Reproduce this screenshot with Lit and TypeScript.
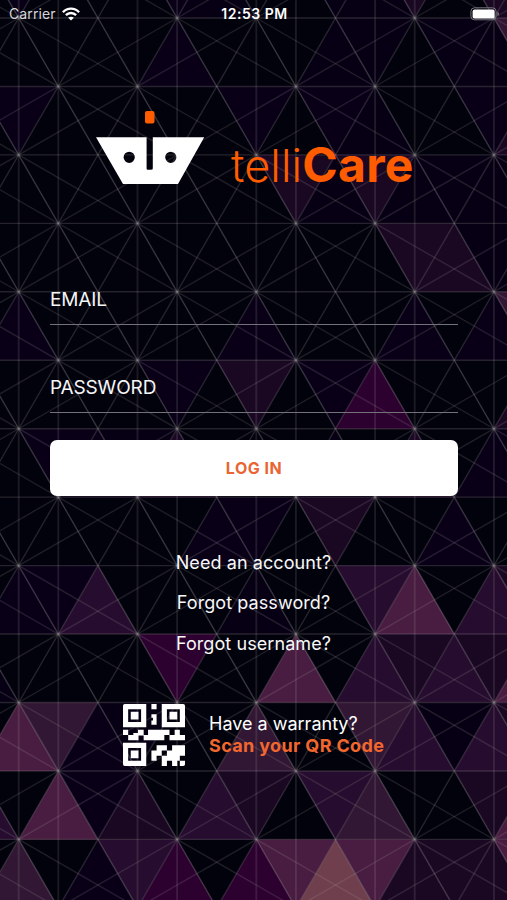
import { LitElement, html, svg, css } from "lit";
import { customElement } from "lit/decorators.js";

const X0 = 18.7;
const Y0 = 18;
const HALF = 39.6;
const ROW = 68.45;

const TONES: Record<string, string> = {
  a: "#070014",
  p: "#090017",
  b: "#1a0823",
  c: "#260c2e",
  m: "#2c002f",
  v: "#311733",
  r: "#491d41",
  o: "#6f3f4d",
};

// Each band of triangles: starting row, then column and tone pairs.
const BANDS: [number, string][] = [
  [-1, "0p 4p 5a 8a 9a 10b 12b 13b"],
  [0, "4p 8a 9a 11a 12a 13v"],
  [1, "0p 6p 8p 9a 12p 13b"],
  [2, "7b 8a 9b 10a 11a 12a 13a"],
  [3, "10b 11b 12a 13a"],
  [4, "0p 6p 10p 12p 13v"],
  [5, "4p 6b 8p 9m 13b"],
  [6, "1p 2p 3a 4b 8a 10b 12p 13p"],
  [7, "5p 6p 8b 11p"],
  [8, "0p 1p 2c 6a 9c 10r 12c 13b"],
  [9, "-1a 4m 7r 9c 10b 11c 12b 13r"],
  [10, "0r 1v 2p 3a 6v 9v 10c 11a 12c 13b"],
  [11, "-1c 1r 2p 3b 5c 6b 8c 9v 12b 13r"],
  [12, "0v 2p 3c 4m 6m 7r 8o 9r 10b 11b 12b 13r"],
];

@customElement("lattice-backdrop")
export class LatticeBackdrop extends LitElement {
  static styles = css`
    :host { display: block; }
    svg { display: block; width: 100%; height: 100%; }
    .line { stroke: #a5a0a0; stroke-opacity: 0.22; stroke-width: 1.4; }
    .column { stroke: #a5a0a0; stroke-opacity: 0.16; stroke-width: 1.9; }
    .ray { stroke: #a5a0a0; stroke-opacity: 0.18; stroke-width: 1.4; }
    .bright { stroke: #b5b0b2; stroke-opacity: 0.29; stroke-width: 1.4; }
    .node { fill: #aaa6a6; fill-opacity: 0.1; }
  `;

  private tiles() {
    return BANDS.flatMap(([i, spec]) =>
      spec.split(" ").map((item) => {
        const k = parseInt(item, 10);
        const x = X0 + HALF * k;
        const top = Y0 + ROW * i;
        const up = (k + i) % 2 === 0;
        const tip = up ? top : top + ROW;
        const base = up ? top + ROW : top;
        return svg`<polygon points="${x},${tip} ${x - HALF},${base} ${x + HALF},${base}" fill=${TONES[item.slice(-1)]}></polygon>`;
      })
    );
  }

  private lines() {
    const out = [];
    const seg = (cls: string, x1: number, y1: number, x2: number, y2: number) =>
      out.push(svg`<line class=${cls} x1=${x1} y1=${y1} x2=${x2} y2=${y2}></line>`);
    const mod = (n: number, m: number) => ((n % m) + m) % m;
    for (let i = 0; i < 13; i++) seg("line", 0, Y0 + ROW * i, 507, Y0 + ROW * i);
    for (let k = 0; k < 13; k++) {
      if (k % 3 !== 2) seg("column", X0 + HALF * k, 0, X0 + HALF * k, 900);
    }
    const yTop = Y0 - ROW;
    for (let k = -27; k < 41; k += 2) {
      const x = X0 + HALF * k;
      seg("bright", x, yTop, x + HALF * 14, yTop + ROW * 14);
      seg("line", x, yTop, x - HALF * 14, yTop + ROW * 14);
    }
    for (let k = -60; k < 60; k += 2) {
      if (mod(k, 3) === 2) continue;
      const x = X0 + HALF * k;
      if (x < 600) seg("ray", x, Y0, x + HALF * 42, Y0 + ROW * 14);
      if (x > -100) seg("ray", x, Y0, x - HALF * 42, Y0 + ROW * 14);
      seg("ray", x, Y0, x + HALF * 3, Y0 - ROW);
      seg("ray", x, Y0, x - HALF * 3, Y0 - ROW);
    }
    for (let i = 0; i < 13; i++) {
      for (let k = 0; k < 13; k++) {
        if ((k + i) % 2 === 0 && k % 3 !== 2) {
          out.push(svg`<circle class="node" cx=${X0 + HALF * k} cy=${Y0 + ROW * i} r="2.4"></circle>`);
        }
      }
    }
    return out;
  }

  render() {
    return html`<svg viewBox="0 0 507 900" preserveAspectRatio="xMidYMin slice" aria-hidden="true">
      <rect width="507" height="900" fill="#02020c"></rect>
      ${this.tiles()}${this.lines()}
    </svg>`;
  }
}

@customElement("app-root")
export class AppRoot extends LitElement {
  static styles = css`
    :host {
      display: block;
      position: relative;
      width: 100%;
      height: 900px;
      overflow: hidden;
      background: #02020c;
      color: #fff;
      font-family: Inter, "Liberation Sans", sans-serif;
    }
    * { box-sizing: border-box; }
    lattice-backdrop { position: absolute; inset: 0; }
    .screen { position: relative; height: 100%; display: flex; flex-direction: column; }
    .status {
      display: grid;
      grid-template-columns: 1fr auto 1fr;
      align-items: center;
      height: 28px;
      padding: 0 7px 0 9px;
      font-size: 14px;
      line-height: 28px;
    }
    .carrier { display: flex; align-items: center; gap: 6px; color: #d6d6da; letter-spacing: 0.1px; }
    .clock { font-weight: 600; font-size: 14px; letter-spacing: 0.5px; }
    .battery { justify-self: end; display: block; }
    .brand { display: flex; align-items: flex-start; height: 78px; margin: 82px 0 0 95px; }
    .brand svg { display: block; }
    .wordmark { margin: 25px 0 0 26px; font-size: 45px; line-height: 60px; color: #ff5c00; white-space: nowrap; }
    .light { font-weight: 300; letter-spacing: 0.1px; }
    .heavy { font-weight: 700; font-size: 48px; letter-spacing: 0.3px; }
    form { margin: 85px 49px 0 50px; display: flex; flex-direction: column; }
    .field {
      width: 100%;
      height: 52px;
      margin: 0 0 36px;
      padding: 2px 0 0;
      border: 0;
      border-bottom: 1px solid #73727a;
      border-radius: 0;
      background: none;
      color: #fff;
      font: 400 19px/50px Inter, sans-serif;
      letter-spacing: -0.15px;
      outline: none;
    }
    .field::placeholder { color: #f5f5f7; opacity: 1; }
    .login {
      height: 56px;
      margin-top: -9px;
      border: 0;
      border-radius: 7px;
      background: #fff;
      color: #e96533;
      font: 700 16px/56px Inter, sans-serif;
      letter-spacing: 0.5px;
      padding: 0;
    }
    .links { display: flex; flex-direction: column; align-items: center; margin-top: 47px; }
    .links a { height: 40.3px; line-height: 40px; font-size: 18px; letter-spacing: 0.08px; color: #f8f8fa; }
    .warranty { display: flex; align-items: flex-start; margin: 40px 0 0 123px; }
    .warranty svg { display: block; }
    .copy { display: flex; flex-direction: column; margin: 9px 0 0 24px; font-size: 18px; line-height: 22px; white-space: nowrap; }
    .scan { font-weight: 700; color: #f2672e; letter-spacing: 0.35px; }
  `;

  render() {
    return html`
      <lattice-backdrop></lattice-backdrop>
      <div class="screen">
        <div class="status">
          <div class="carrier">
            <span>Carrier</span>
            <svg width="18" height="14" viewBox="0 0 18 14" fill="none" stroke="#fff" stroke-width="2.4">
              <path d="M0.9 5.2C5.4 0.4 12.6 0.4 17.1 5.2M3.9 8.2C6.8 5.2 11.2 5.2 14.1 8.2"></path>
              <path d="M9 13.6L6.1 10.7C7.6 9.3 10.4 9.3 11.9 10.7Z" fill="#fff" stroke="none"></path>
            </svg>
          </div>
          <span class="clock">12:53 PM</span>
          <svg class="battery" width="30" height="14" viewBox="0 0 30 14">
            <rect x="0.9" y="0.8" width="25.2" height="12" rx="3.6" fill="none" stroke="#77757c" stroke-width="1"></rect>
            <rect x="2.6" y="2.4" width="22" height="9" rx="2" fill="#fff"></rect>
            <path d="M27.4 4.8Q29 5.3 29 6.9Q29 8.5 27.4 9Z" fill="#77757c"></path>
          </svg>
        </div>

        <div class="brand">
          <svg width="110" height="76" viewBox="0 0 110 76">
            <rect x="50" y="1" width="9.5" height="12.5" rx="2" fill="#ff5c00"></rect>
            <path fill="#fff" fill-rule="evenodd" d="M1 27.2H51.6V58.6Q51.6 59.8 52.8 59.8H56.6Q57.8 59.8 57.8 58.6V27.2H109.2L83 74H28ZM28.6 47.3a5.6 5.6 0 1 0 11.2 0a5.6 5.6 0 1 0 -11.2 0ZM70.2 47.3a5.6 5.6 0 1 0 11.2 0a5.6 5.6 0 1 0 -11.2 0Z"></path>
          </svg>
          <div class="wordmark"><span class="light">telli</span><span class="heavy">Care</span></div>
        </div>

        <form @submit=${(e: Event) => e.preventDefault()}>
          <input class="field" type="text" placeholder="EMAIL" aria-label="Email" />
          <input class="field" type="password" placeholder="PASSWORD" aria-label="Password" />
          <button class="login" type="submit">LOG IN</button>
        </form>

        <nav class="links">
          <a>Need an account?</a>
          <a>Forgot password?</a>
          <a>Forgot username?</a>
        </nav>

        <div class="warranty">
          <svg width="62" height="62" viewBox="0 0 24 24" fill="#fff" fill-rule="evenodd">
            <path d="M.7 0H9V9H0V.7Q0 0 .7 0ZM2 2V7H7V2ZM3 3H6V6H3Z"></path>
            <path d="M15 0H23.3Q24 0 24 .7V9H15ZM17 2V7H22V2ZM18 3H21V6H18Z"></path>
            <path d="M0 15H9V24H.7Q0 24 0 23.3ZM2 17V22H7V17ZM3 18H6V21H3Z"></path>
            <path d="M11 0H13V2H11ZM11 4H13V8H11V6.4H11.6V5.3H11Z"></path>
            <path d="M0 10H2V12H4V11.2H5.8V10H8V12H9.7V10H18V12H20V10H22V12H24V14H18V12H16V14H8V12.2H6V14H2V12H0Z"></path>
            <path d="M13 16H17V18H19V16H24V20H22V22H21V24H19V22H17V24H15V20H17V18H15V20H13V22H11V18H13ZM22 22H24V23.3Q24 24 23.3 24H22Z"></path>
          </svg>
          <div class="copy"><span>Have a warranty?</span><span class="scan">Scan your QR Code</span></div>
        </div>
      </div>
    `;
  }
}
